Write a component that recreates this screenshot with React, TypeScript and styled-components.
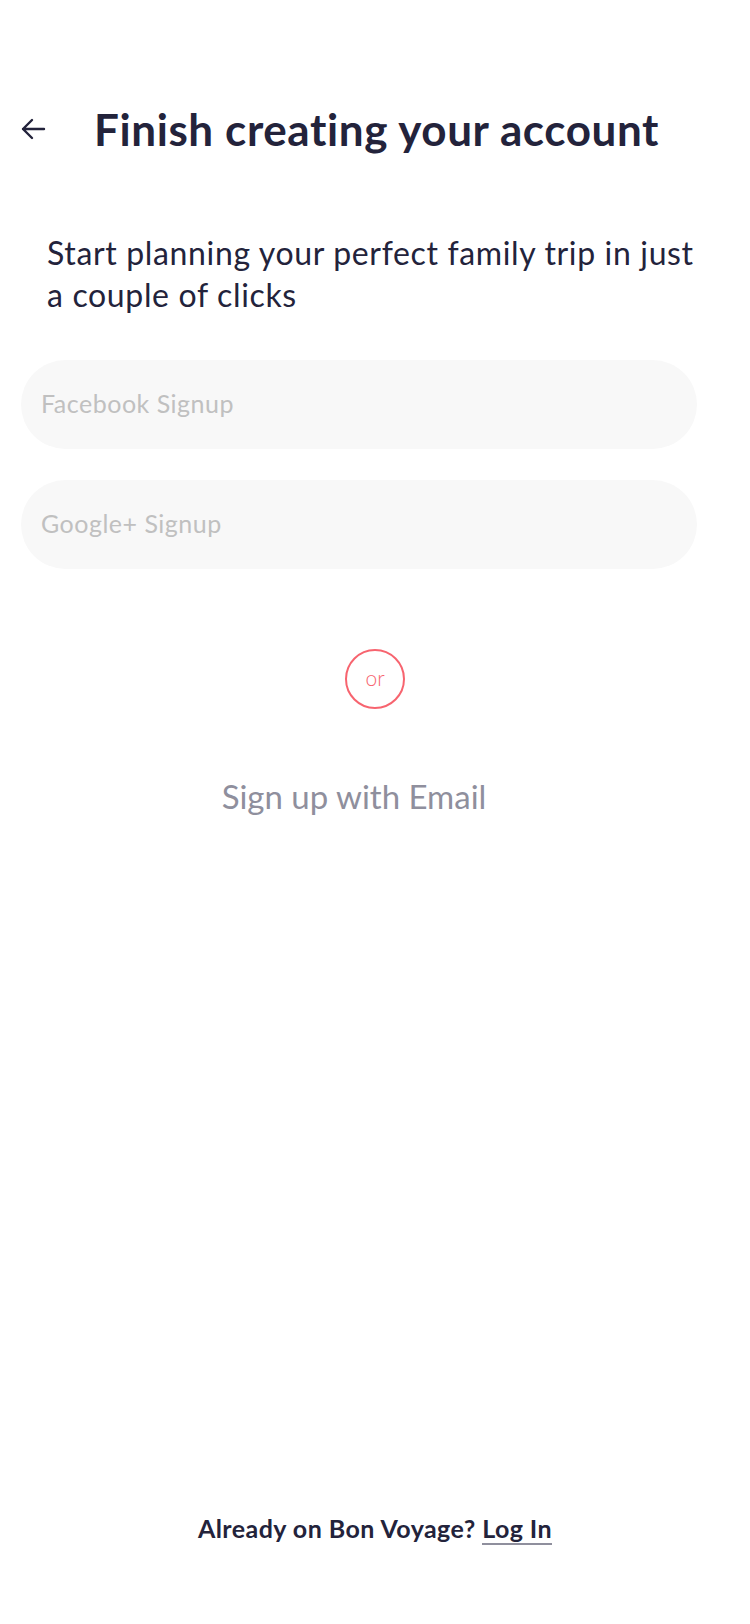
import React from 'react';
import styled, { createGlobalStyle } from 'styled-components';

const GlobalStyle = createGlobalStyle`
  html, body {
    margin: 0;
    padding: 0;
    background: #ffffff;
  }
  body {
    font-family: Lato, "Noto Sans", "Liberation Sans", sans-serif;
    color: #23233b;
  }
`;

const BackArrow = () => (
  <svg width="28" height="28" viewBox="0 0 28 28" fill="none">
    <path d="M25 14H4M13 5L4 14L13 23" stroke="#23233b" strokeWidth="2.4" strokeLinecap="round" strokeLinejoin="round" />
  </svg>
);

const App = () => {
  return (
    <Page>
      <GlobalStyle />
      <Header>
        <BackButton aria-label="back">
          <BackArrow />
        </BackButton>
        <Title>Finish creating your account</Title>
      </Header>
      <Subtitle>Start planning your perfect family trip in just a couple of clicks</Subtitle>
      <Fields>
        <Field placeholder="Facebook Signup" />
        <Field placeholder="Google+ Signup" />
      </Fields>
      <OrCircle>or</OrCircle>
      <EmailLink>Sign up with Email</EmailLink>
      <Footer>
        Already on Bon Voyage? <LoginLink>Log In</LoginLink>
      </Footer>
    </Page>
  );
};

export default App;

const Page = styled.div`
  display: flex;
  flex-direction: column;
  min-height: 1624px;
  box-sizing: border-box;
  padding-top: 99px;
`;

const Header = styled.div`
  display: flex;
  align-items: center;
  height: 60px;
  padding-left: 18px;
`;

const BackButton = styled.button`
  display: flex;
  align-items: center;
  justify-content: center;
  width: 30px;
  height: 30px;
  padding: 0;
  border: none;
  background: none;
  margin-right: 46px;
`;

const Title = styled.h1`
  margin: 0;
  font-size: 44px;
  font-weight: 700;
  color: #23233b;
  letter-spacing: 0.6px;
`;

const Subtitle = styled.p`
  margin: 73px 40px 0 47px;
  font-size: 32px;
  line-height: 42px;
  letter-spacing: 0.65px;
  color: #23233b;
`;

const Fields = styled.div`
  display: flex;
  flex-direction: column;
  gap: 31px;
  margin: 44px 53px 0 21px;
`;

const Field = styled.input`
  box-sizing: border-box;
  height: 89px;
  border: none;
  border-radius: 45px;
  background: #f8f8f8;
  padding: 0 20px 3px;
  font-family: Lato, "Noto Sans", sans-serif;
  font-size: 25px;
  letter-spacing: 0.5px;
  outline: none;
  &::placeholder {
    color: #c0c0c0;
  }
`;

const OrCircle = styled.div`
  align-self: center;
  display: flex;
  align-items: center;
  justify-content: center;
  box-sizing: border-box;
  width: 60px;
  height: 60px;
  margin-top: 80px;
  padding-bottom: 4px;
  border: 2px solid #f7646f;
  border-radius: 50%;
  color: #f7646f;
  font-size: 21px;
  font-weight: 300;
  line-height: 1;
`;

const EmailLink = styled.div`
  align-self: center;
  margin-top: 67px;
  margin-right: 42px;
  font-size: 33px;
  color: #8f8f9d;
`;

const Footer = styled.div`
  margin-top: auto;
  margin-bottom: 81px;
  text-align: center;
  font-size: 25px;
  font-weight: 700;
  letter-spacing: 0.45px;
  color: #23233b;
`;

const LoginLink = styled.a`
  color: #23233b;
  text-decoration: none;
  border-bottom: 2px solid #8f8f9d;
`;
